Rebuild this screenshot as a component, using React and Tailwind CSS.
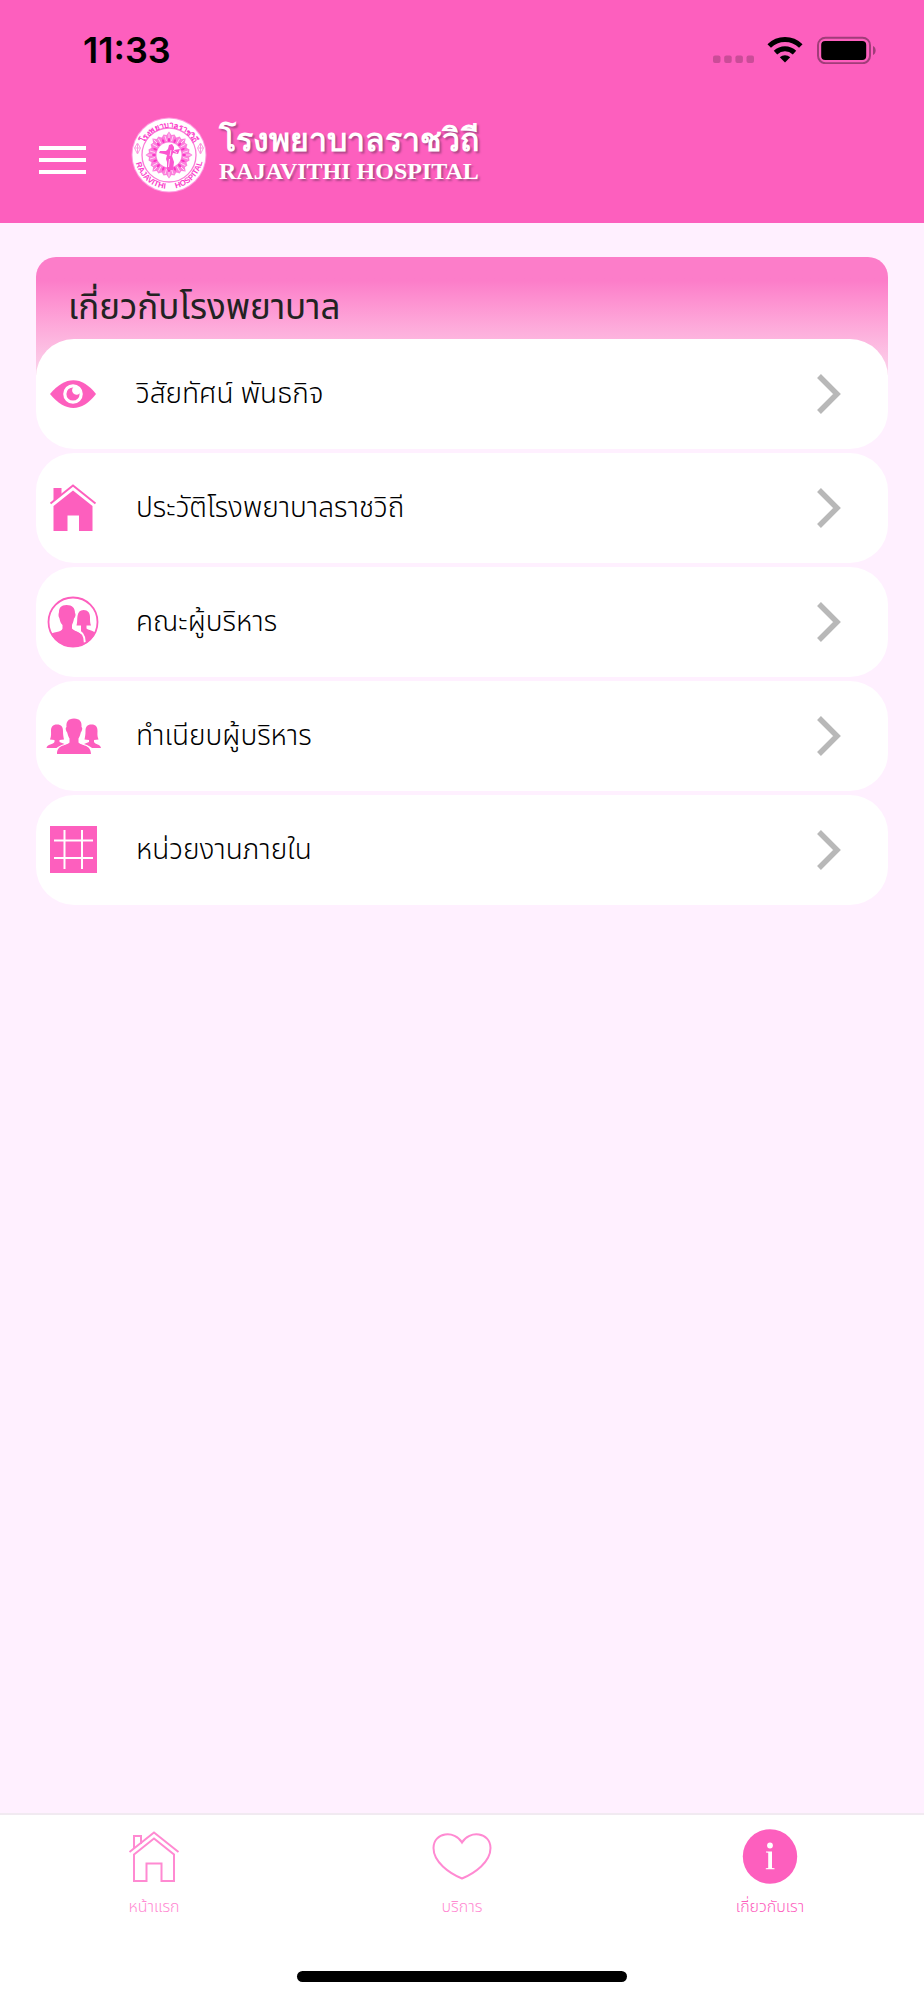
import React, { useState } from 'react';

const STAR_ANGLES = [0, 45, 90, 135, 180, 225, 270, 315];
const DOT_ANGLES = [0, 22.5, 45, 67.5, 90, 112.5, 135, 157.5, 180, 202.5, 225, 247.5, 270, 292.5, 315, 337.5];

const HospitalSeal = () => (
  <svg viewBox="0 0 76 76" className="size-[76px] shrink-0" aria-hidden="true">
    <defs>
      <path id="seal-top" d="M 10.5 38 A 27.5 27.5 0 0 1 65.5 38" />
      <path id="seal-bottom" d="M 4 38 A 34 34 0 0 0 72 38" />
    </defs>
    <circle cx="38" cy="38" r="37.5" fill="#ff9ae0" />
    <circle cx="38" cy="38" r="36.5" fill="#fff" />
    <circle cx="38" cy="38" r="27" fill="none" stroke="#fb7bd8" strokeWidth="1.3" />
    <g fill="#fb55d0">
      {STAR_ANGLES.map((angle) => (
        <g key={angle} transform={`rotate(${angle} 38 38)`}>
          <path d="M38 14.500 L40.500 18 L43.500 17.500 L45.500 21 L42 29 H34 L30.500 21 L32.500 17.500 L35.500 18 Z" opacity="0.75" />
          <path d="M38 16.500 V21 M34 19 L35.500 24 M42 19 L40.500 24" stroke="#fff" strokeWidth="0.7" />
        </g>
      ))}
    </g>
    <circle cx="38" cy="38" r="12.5" fill="#fff" />
    <g fill="#f935c6">
      {DOT_ANGLES.map((angle) => (
        <ellipse key={angle} cx="38" cy="23" rx="1.100" ry="1.900" transform={`rotate(${angle} 38 38)`} />
      ))}
    </g>
    <path
      d="M38 28 l3 -1 2 3 0 3 6 -1 -2 5 -5 -1 -1 3 2 6 -1 8 h-6 l0 -8 -1 -3 1 -4 -3 -1 -5 -1 1 -2 6 0 2 -2 Z"
      fill="#fb55d0"
    />
    <path d="M38.500 42 l-1 8 M40 33 l-1 6 M42 33 l4 3" stroke="#fff" strokeWidth="0.8" />
    <g fill="none" stroke="#fb9be0" strokeWidth="1">
      <path d="M3.500 31 l3 -5 3 5 -3 6 Z M4 31 h5 M6.500 27 v9" />
      <path d="M66.500 31 l3 -5 3 5 -3 6 Z M67 31 h5 M69.500 27 v9" />
    </g>
    <g fill="#fb3fcb" fontFamily="'Liberation Sans', sans-serif" textAnchor="middle">
      <text fontSize="8" fontWeight="700">
        <textPath href="#seal-top" startOffset="50%">โรงพยาบาลราชวิถี</textPath>
      </text>
      <text fontSize="8" fontWeight="700">
        <textPath href="#seal-bottom" startOffset="27%">RAJAVITHI</textPath>
      </text>
      <text fontSize="8" fontWeight="700">
        <textPath href="#seal-bottom" startOffset="75%">HOSPITAL</textPath>
      </text>
    </g>
  </svg>
);

const StatusIcons = () => (
  <div className="flex items-center">
    <svg viewBox="0 0 42 28" className="w-[42px] h-7" fill="#ca4c98" aria-hidden="true">
      <rect x="0" y="19.500" width="7.500" height="7.500" rx="2" />
      <rect x="11.200" y="19.500" width="7.500" height="7.500" rx="2" />
      <rect x="22.400" y="19.500" width="7.500" height="7.500" rx="2" />
      <rect x="33.500" y="19.500" width="7.500" height="7.500" rx="2" />
    </svg>
    <svg viewBox="0 0 36 28" className="w-9 h-7 ml-3" aria-hidden="true">
      <g fill="none" stroke="#000" strokeWidth="5">
        <path d="M2.200 10 C11 1.300 25 1.300 33.800 10" />
        <path d="M8.500 16.600 C14 11.400 22 11.400 27.500 16.600" />
      </g>
      <path d="M12.800 21.200 C15.800 18.500 20.200 18.500 23.200 21.200 L18 26.500 Z" />
    </svg>
    <svg viewBox="0 0 60 28" className="w-[60px] h-7 ml-[13px]" aria-hidden="true">
      <rect x="2" y="1.700" width="52" height="25.500" rx="7.500" fill="none" stroke="#a03d79" strokeWidth="2" />
      <rect x="5.200" y="5" width="45" height="19" rx="4" />
      <path d="M57 10 C60.500 11.500 60.500 17.500 57 19 Z" fill="#a03d79" />
    </svg>
  </div>
);

const EyeIcon = () => (
  <svg viewBox="0 0 56 56" className="size-14" aria-hidden="true">
    <path d="M5 28 C20 9.500 37 9.500 51 28 C37 46.500 20 46.500 5 28 Z" fill="#fd5fbe" />
    <circle cx="28" cy="28" r="8.200" fill="none" stroke="#fff" strokeWidth="3.200" />
    <path d="M28.500 21 A4.200 4.200 0 0 0 34.500 27.500 L36 23 L32 20.500 Z" fill="#fff" />
  </svg>
);

const HouseIcon = () => (
  <svg viewBox="0 0 56 56" className="size-14" fill="#fd5fbe" aria-hidden="true">
    <path d="M8.500 8 H16.500 V14.500 L8.500 21 Z" />
    <path d="M5.500 23.500 L28 5.500 L50.500 23.500" fill="none" stroke="#fd5fbe" strokeWidth="2" />
    <path d="M28 10.500 L47.500 26 V51 H34 V35.500 H22.500 V51 H8.500 V26 Z" />
  </svg>
);

const CoupleIcon = () => (
  <svg viewBox="0 0 56 56" className="size-14" aria-hidden="true">
    <defs>
      <clipPath id="couple-clip">
        <circle cx="28" cy="28" r="25" />
      </clipPath>
    </defs>
    <g clipPath="url(#couple-clip)" fill="#fd5fbe">
      <path d="M38.500 16 C43 16 45 19 45 23 C45 27 45 29 46 31.500 H41.500 V34.500 C44 36.500 50 36 52 42 L42 56 L36 50 V36 C36 35 36 33 36 31.500 H31.500 C32.500 28 32 25 32.500 22 C33 18 35 16 38.500 16 Z" />
      <path d="M21.500 11 C27.500 11 30 14 30 19 C31 20 30.500 23 29 24.500 C28.500 28 27.500 29.500 27 31 V34.500 C29 38 39 36.500 40.500 49 L40 56 H2 V43 C6 37 17 39 17.500 34.500 V31 C15.500 29 15 27 14.500 24.500 C13 22 13.500 20 14 18 C14 14 16 11 21.500 11 Z" />
      <path d="M30.500 35.500 C36 37 40 40 39.800 48.500" fill="none" stroke="#fff" strokeWidth="2" />
    </g>
    <circle cx="28" cy="28" r="24.500" fill="none" stroke="#fd5fbe" strokeWidth="1.800" />
  </svg>
);

const TeamIcon = () => (
  <svg viewBox="0 0 56 56" className="size-14" fill="#fd5fbe" aria-hidden="true">
    <path d="M12 16.500 C16.500 16.500 18 19 18 23 C18 27 18.500 29 19 31.500 L14.500 32 V34 L19.500 36 C15 37.500 12.500 39 11.500 40 H1.500 C2 36 8.500 36.500 9.500 34 V32 L5 31.500 C6.500 28 6 25 6 23 C6 19 7.500 16.500 12 16.500 Z" />
    <path d="M46.500 16.500 C42 16.500 40.500 19 40.500 23 C40.500 27 40 29 39.500 31.500 L44 32 V34 L39 36 C43.500 37.500 46 39 47 40 H56 C55.500 36 50 36.500 49 34 V32 L53.500 31.500 C52 28 52.500 25 52.500 23 C52.500 19 51 16.500 46.500 16.500 Z" />
    <path d="M29 10.500 C35 10.500 37 14 36.500 19 C38 20 37 23 35.800 24.500 C35 28 34 29.500 33.500 30.500 V34.500 C36 38 46 36 46 46 H12 C12 36 22 38 24.500 34.500 V30.500 C24 29.500 23 28 22.200 24.500 C21 23 20 20 21.500 19 C21 14 23 10.500 29 10.500 Z" />
  </svg>
);

const GridIcon = () => (
  <svg viewBox="0 0 56 56" className="size-14" aria-hidden="true">
    <rect x="5" y="4" width="47" height="47" fill="#fd5fbe" />
    <path d="M19.500 8 V47 M37 8 V47 M9 18.500 H48 M9 36 H48" fill="none" stroke="#fff" strokeWidth="2" />
  </svg>
);

const ChevronIcon = () => (
  <svg viewBox="0 0 24 40" className="w-6 h-10" aria-hidden="true">
    <path d="M2 2 L20 20 L2 38" fill="none" stroke="#b8b8b8" strokeWidth="5.500" />
  </svg>
);

const HomeTabIcon = () => (
  <svg viewBox="0 0 60 56" className="w-[60px] h-14" fill="none" stroke="#ff8ad2" strokeWidth="2" aria-hidden="true">
    <path d="M10 21 V8 H17 V16" />
    <path d="M5.500 24 L30 4.500 L54.500 24" />
    <path d="M10 26.500 L30 10.500 L50 26.500 V53 H37.500 V35.500 H22.500 V53 H10 Z" />
  </svg>
);

const HeartTabIcon = () => (
  <svg viewBox="0 0 60 56" className="w-[60px] h-14" fill="none" stroke="#ff8ad2" strokeWidth="2" aria-hidden="true">
    <path d="M30 14.500 C23 2 1.500 4 1.500 20 C1.500 34 17 45 30 50.500 C43 45 58.500 34 58.500 20 C58.500 4 37 2 30 14.500 Z" />
  </svg>
);

const InfoTabIcon = () => (
  <svg viewBox="0 0 60 56" className="w-[60px] h-14" aria-hidden="true">
    <circle cx="30" cy="28.500" r="27.200" fill="#fd5fbe" />
    <circle cx="30" cy="17.500" r="2.900" fill="#fff" />
    <path d="M26 23.500 H32 V40 L34.500 40.300 V41.300 H25.800 V40.300 L28.200 40 V24.700 L26 24.500 Z" fill="#fff" />
  </svg>
);

const menuItems = [
  { label: 'วิสัยทัศน์ พันธกิจ', href: '#vision', Icon: EyeIcon },
  { label: 'ประวัติโรงพยาบาลราชวิถี', href: '#history', Icon: HouseIcon },
  { label: 'คณะผู้บริหาร', href: '#executives', Icon: CoupleIcon },
  { label: 'ทำเนียบผู้บริหาร', href: '#directory', Icon: TeamIcon },
  { label: 'หน่วยงานภายใน', href: '#departments', Icon: GridIcon },
];

const tabs = [
  { id: 'home', label: 'หน้าแรก', Icon: HomeTabIcon },
  { id: 'services', label: 'บริการ', Icon: HeartTabIcon },
  { id: 'about', label: 'เกี่ยวกับเรา', Icon: InfoTabIcon },
];

const App = () => {
  const [activeTab, setActiveTab] = useState('about');

  return (
    <div className="min-h-screen bg-[#fff0ff] flex flex-col font-['Noto_Sans_Thai','Noto_Sans',sans-serif]">
      <header className="bg-[#fd5fbe] pb-7">
        {/* Status bar */}
        <div className="h-[100px] pl-[83px] pr-12 flex items-center justify-between">
          <span className="font-['Inter',sans-serif] text-4xl font-semibold text-black">11:33</span>
          <StatusIcons />
        </div>

        {/* App bar */}
        <div className="h-[95px] pl-[39px] flex items-end">
          <button type="button" aria-label="Menu" className="w-[47px] pb-[21px] flex flex-col gap-2">
            <span className="h-1 bg-white" />
            <span className="h-1 bg-white" />
            <span className="h-1 bg-white" />
          </button>
          <div className="ml-[45px] pb-0.5 flex items-start gap-3">
            <HospitalSeal />
            <div className="text-white font-bold font-['Liberation_Serif',serif] [text-shadow:2px_2px_2px_#b0488a]">
              <p className="text-[32px] leading-[46px] whitespace-nowrap">โรงพยาบาลราชวิถี</p>
              <p className="text-2xl leading-4 whitespace-nowrap">RAJAVITHI HOSPITAL</p>
            </div>
          </div>
        </div>
      </header>

      <main className="flex-1 px-9 pt-[34px]">
        <div className="h-[118px] rounded-t-[20px] bg-linear-to-b from-[#fc7dc9] from-20% to-[#fad5ec] px-8 pt-7">
          <h1 className="text-[35px] leading-12 text-[#222]">เกี่ยวกับโรงพยาบาล</h1>
        </div>
        <ul className="-mt-9 flex flex-col gap-1">
          {menuItems.map(({ label, href, Icon }) => (
            <li key={href}>
              <a href={href} className="h-[110px] bg-white rounded-[38px] pl-[9px] pr-[47px] flex items-center">
                <Icon />
                <span className="flex-1 ml-[35px] pt-0.5 text-[28px] font-light text-black">{label}</span>
                <ChevronIcon />
              </a>
            </li>
          ))}
        </ul>
      </main>

      <footer className="bg-white border-t-2 border-[#f1eaf1]">
        <nav className="grid grid-cols-3 pt-[13px]">
          {tabs.map(({ id, label, Icon }) => (
            <button
              key={id}
              type="button"
              onClick={() => setActiveTab(id)}
              className={`flex flex-col items-center gap-[11px] text-base font-light ${activeTab === id ? 'text-[#fd5fbe]' : 'text-[#ff8ad2]'}`}
            >
              <Icon />
              <span>{label}</span>
            </button>
          ))}
        </nav>
        <div className="mt-[52px] mb-[18px] mx-auto w-[330px] h-[11px] rounded-full bg-black" />
      </footer>
    </div>
  );
};

export default App;
